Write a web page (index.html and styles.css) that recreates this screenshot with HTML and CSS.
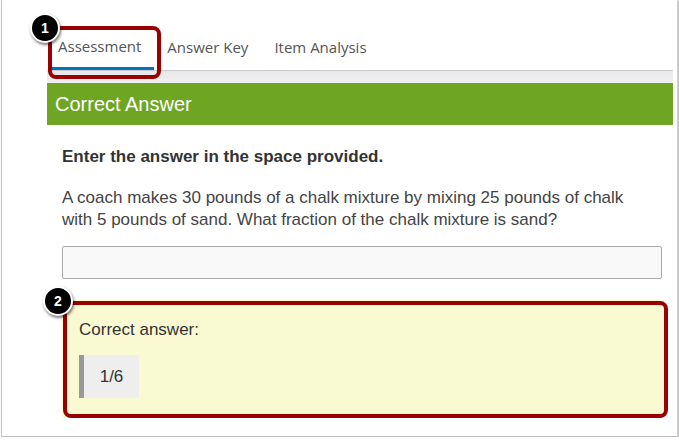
FILE: index.html
```html
<!DOCTYPE html>
<html lang="en">
<head>
<meta charset="utf-8">
<title>Correct Answer</title>
<link rel="stylesheet" href="styles.css">
</head>
<body>
<div class="frame">
  <nav class="tabs">
    <span class="tab tab-active">Assessment</span>
    <span class="tab">Answer Key</span>
    <span class="tab">Item Analysis</span>
  </nav>
  <div class="strip"></div>
  <header class="banner">Correct Answer</header>
  <section class="question">
    <p class="prompt">Enter the answer in the space provided.</p>
    <p class="stem">A coach makes 30 pounds of a chalk mixture by mixing 25 pounds of chalk with 5 pounds of sand. What fraction of the chalk mixture is sand?</p>
    <div class="answer-input"></div>
    <div class="feedback">
      <p class="feedback-label">Correct answer:</p>
      <div class="answer-chip">1/6</div>
    </div>
  </section>

  <div class="callout callout-tab"></div>
  <div class="badge badge-1">1</div>
  <div class="callout callout-answer"></div>
  <div class="badge badge-2">2</div>
</div>
</body>
</html>
```

FILE: styles.css
```css
html, body {
  margin: 0;
  padding: 0;
  background: #ffffff;
}

.frame {
  position: relative;
  box-sizing: border-box;
  width: 677px;
  height: 437px;
  margin-left: 1px;
  border-left: 1px solid #c8c8c8;
  border-right: 1px solid #cfcfcf;
  border-bottom: 1px solid #bdbdbd;
  box-shadow: 1px 1px 2px rgba(0, 0, 0, 0.35);
  padding: 27px 4px 0 45px;
  font-family: "Liberation Sans", Arial, sans-serif;
  color: #333;
}

.tabs {
  display: flex;
  height: 43px;
  border-bottom: 1px solid #c9cdd1;
  padding-left: 5px;
  font-family: "Open Sans", "Liberation Sans", sans-serif;
  font-size: 15px;
}

.tab {
  display: flex;
  align-items: center;
  padding: 0 13px 3px;
  color: #555;
  height: 40px;
}

.tab-active {
  padding-left: 6px;
  padding-right: 13px;
  border-bottom: 3px solid #0770bd;
  color: #555;
  height: 37px;
  padding-bottom: 3px;
}

.strip {
  height: 12px;
  background: linear-gradient(#e8e8e8, #efefef);
}

.banner {
  height: 42px;
  display: flex;
  align-items: center;
  padding-left: 8px;
  background: #6ea623;
  color: #ffffff;
  font-size: 20px;
}

.question {
  padding: 21px 11px 0 15px;
}

.prompt {
  margin: 0;
  font-size: 17px;
  line-height: 22px;
  font-weight: bold;
  color: #333;
}

.stem {
  margin: 19px 20px 0 0;
  font-size: 17px;
  line-height: 22px;
  color: #444;
}

.answer-input {
  margin-top: 15px;
  height: 31px;
  border: 1px solid #aaaaaa;
  border-radius: 2px;
  background: #f9f9f9;
}

.feedback {
  margin-top: 21px;
  margin-right: -2px;
  padding: 19px 17px 20px;
  background: #fafad2;
  height: 78px;
}

.feedback-label {
  margin: 0;
  font-size: 17px;
  line-height: 22px;
  color: #333;
}

.answer-chip {
  margin-top: 14px;
  width: 60px;
  height: 43px;
  box-sizing: border-box;
  border-left: 5px solid #999999;
  background: #eeeeee;
  display: flex;
  align-items: center;
  justify-content: center;
  font-size: 17px;
  color: #333;
}

.callout {
  position: absolute;
  box-sizing: border-box;
  border: 4px solid #990000;
  border-radius: 8px;
}

.callout-tab {
  left: 46px;
  top: 26px;
  width: 113px;
  height: 53px;
}

.callout-answer {
  left: 61px;
  top: 301px;
  width: 605px;
  height: 117px;
}

.badge {
  position: absolute;
  box-sizing: border-box;
  width: 30px;
  height: 30px;
  border-radius: 50%;
  border: 2px solid #ffffff;
  background: #000000;
  color: #ffffff;
  font-family: "Liberation Sans", Arial, sans-serif;
  font-weight: bold;
  font-size: 14px;
  display: flex;
  align-items: center;
  justify-content: center;
  box-shadow: 1px 2px 3px rgba(0, 0, 0, 0.55);
}

.badge-1 {
  left: 28px;
  top: 13px;
}

.badge-2 {
  left: 41px;
  top: 286px;
}
```
